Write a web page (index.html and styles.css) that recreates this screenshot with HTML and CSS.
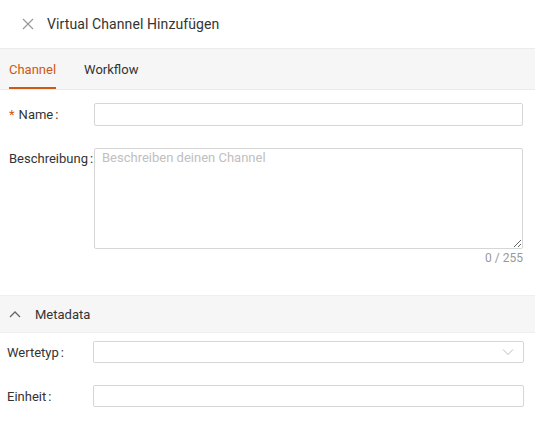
FILE: index.html
```html
<!DOCTYPE html>
<html lang="de">
<head>
    <meta charset="UTF-8">
    <meta name="viewport" content="width=device-width, initial-scale=1.0">
    <title>Virtual Channel Hinzufügen</title>
    <link rel="stylesheet" href="styles.css">
</head>
<body>
    <div class="drawer">
        <div class="drawer-header">
            <button class="close-button" aria-label="Schließen">
                <svg width="12" height="12" viewBox="0 0 12 12">
                    <path d="M1 1L11 11M11 1L1 11" stroke="#999" stroke-width="1.2" fill="none"/>
                </svg>
            </button>
            <h2 class="drawer-title">Virtual Channel Hinzufügen</h2>
        </div>

        <div class="tabs">
            <div class="tab tab-active">Channel</div>
            <div class="tab">Workflow</div>
        </div>

        <form class="form">
            <div class="form-row">
                <label class="form-label"><span class="required">*</span>Name<span class="colon">:</span></label>
                <input type="text" class="input-field input-tall">
            </div>

            <div class="form-row form-row-top">
                <label class="form-label">Beschreibung<span class="colon">:</span></label>
                <div class="textarea-wrap">
                    <textarea class="textarea-field" placeholder="Beschreiben deinen Channel"></textarea>
                    <div class="counter">0 / 255</div>
                </div>
            </div>
        </form>

        <div class="section-header">
            <svg width="12" height="8" viewBox="0 0 12 8">
                <path d="M1 7L6 2L11 7" stroke="#666" stroke-width="1.3" fill="none"/>
            </svg>
            <span>Metadata</span>
        </div>

        <form class="form form-meta">
            <div class="form-row">
                <label class="form-label form-label-meta">Wertetyp<span class="colon">:</span></label>
                <div class="select-field">
                    <svg width="12" height="8" viewBox="0 0 12 8">
                        <path d="M1 1.5L6 6.5L11 1.5" stroke="#bbb" stroke-width="1" fill="none"/>
                    </svg>
                </div>
            </div>
            <div class="form-row">
                <label class="form-label form-label-meta">Einheit<span class="colon">:</span></label>
                <input type="text" class="input-field">
            </div>
        </form>
    </div>
</body>
</html>
```

FILE: styles.css
```css
body {
    margin: 0;
    font-family: Roboto, 'Liberation Sans', Arial, sans-serif;
    background: white;
    color: #333;
}

.drawer {
    width: 535px;
    height: 424px;
    overflow: hidden;
}

.drawer-header {
    display: flex;
    align-items: center;
    height: 48px;
    padding-left: 16px;
    box-sizing: border-box;
}

.close-button {
    background: none;
    border: none;
    padding: 6px;
    margin-right: 7px;
    display: flex;
    cursor: pointer;
}

.drawer-title {
    font-size: 14px;
    font-weight: normal;
    margin: 0;
    color: #333;
    letter-spacing: 0.1px;
}

.tabs {
    display: flex;
    gap: 28px;
    background: #f6f6f6;
    border-top: 1px solid #ebebeb;
    border-bottom: 1px solid #ebebeb;
    padding-left: 9px;
    height: 40px;
}

.tab {
    font-size: 13px;
    color: #333;
    box-sizing: border-box;
    border-bottom: 2px solid transparent;
    line-height: 42px;
    height: 40px;
}

.tab-active {
    color: #d1580f;
    border-bottom-color: #d1580f;
}

.form {
    padding: 13px 12px 0 9px;
}

.form-row {
    display: flex;
    align-items: center;
    margin-bottom: 22px;
}

.form-row-top {
    align-items: flex-start;
    margin-bottom: 0;
}

.form-label {
    width: 85px;
    flex-shrink: 0;
    font-size: 13px;
    color: #333;
}

.form-row-top .form-label {
    margin-top: 3px;
}

.required {
    color: #d1580f;
    margin-right: 4px;
}

.colon {
    margin-left: 2px;
}

.input-field {
    flex: 1;
    height: 22px;
    border: 1px solid #d6d6d6;
    border-radius: 2px;
    box-sizing: border-box;
    font-size: 13px;
    padding: 0 8px;
}

.input-tall {
    height: 23px;
}

.textarea-wrap {
    flex: 1;
    display: flex;
    flex-direction: column;
}

.textarea-field {
    height: 101px;
    border: 1px solid #d6d6d6;
    border-radius: 2px;
    box-sizing: border-box;
    font-family: inherit;
    font-size: 13px;
    padding: 1px 7px;
    resize: vertical;
    margin: 0;
}

.textarea-field::placeholder {
    color: #c0c0c0;
}

.counter {
    text-align: right;
    font-size: 12px;
    color: #999;
    margin-top: 2px;
}

.section-header {
    display: flex;
    align-items: center;
    gap: 14px;
    height: 36px;
    margin-top: 30px;
    padding-left: 9px;
    background: #f6f6f6;
    border-top: 1px solid #efefef;
    border-bottom: 1px solid #efefef;
    font-size: 13px;
    color: #333;
}

.form-meta {
    padding: 8px 11px 0 7px;
}

.form-meta .form-row {
    margin-bottom: 22px;
}

.form-label-meta {
    width: 86px;
}

.select-field {
    flex: 1;
    height: 22px;
    border: 1px solid #d6d6d6;
    border-radius: 2px;
    box-sizing: border-box;
    display: flex;
    align-items: center;
    justify-content: flex-end;
    padding-right: 9px;
}
```
